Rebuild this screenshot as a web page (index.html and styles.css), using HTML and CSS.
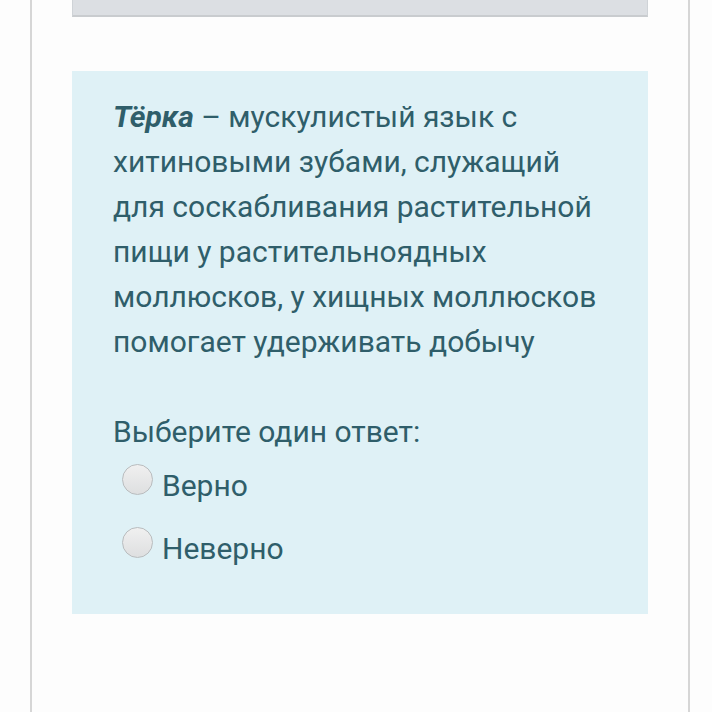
FILE: index.html
```html
<!DOCTYPE html>
<html lang="ru">
<head>
    <meta charset="UTF-8">
    <meta name="viewport" content="width=device-width, initial-scale=1.0">
    <title>Вопрос</title>
    <link rel="stylesheet" href="styles.css">
</head>
<body>
    <div class="page">
        <div class="prev-box"></div>

        <div class="question">
            <p class="qtext"><b>Тёрка</b> – мускулистый язык с хитиновыми зубами, служащий для соскабливания растительной пищи у растительноядных моллюсков, у хищных моллюсков помогает удерживать добычу</p>

            <p class="prompt">Выберите один ответ:</p>
            <div class="answers">
                <label class="option"><span class="radio"></span>Верно</label>
                <label class="option"><span class="radio"></span>Неверно</label>
            </div>
        </div>
    </div>
</body>
</html>
```

FILE: styles.css
```css
*{
    margin: 0;
    padding: 0;
    box-sizing: border-box;
}
body{
    background-color: #fdfdfd;
    font-family: Roboto, "Noto Sans", sans-serif;
}
.page{
    margin-left: 30px;
    width: 660px;
    height: 712px;
    border-left: 2px solid #d6d6d6;
    border-right: 2px solid #d6d6d6;
    padding: 0 40px;
}
.prev-box{
    height: 17px;
    background-color: #dcdfe3;
    border: 1px solid #cfd3d7;
    border-top: none;
    border-bottom: 2px solid #c9cccf;
    margin-bottom: 54px;
}
.question{
    background-color: #dff1f6;
    padding: 23px 38px 34px 41px;
    color: #2f5e6a;
    font-size: 30px;
    line-height: 45px;
}
.qtext b{
    font-style: italic;
    font-weight: 700;
}
.prompt{
    margin-top: 45px;
}
.answers{
    padding-left: 9px;
}
.option{
    display: flex;
    align-items: center;
    height: 63px;
}
.radio{
    width: 31px;
    height: 31px;
    border-radius: 50%;
    border: 1px solid #b9bcbe;
    background: linear-gradient(#f0f0f0, #dedfe0);
    margin-right: 9px;
    margin-top: -12px;
}
```
